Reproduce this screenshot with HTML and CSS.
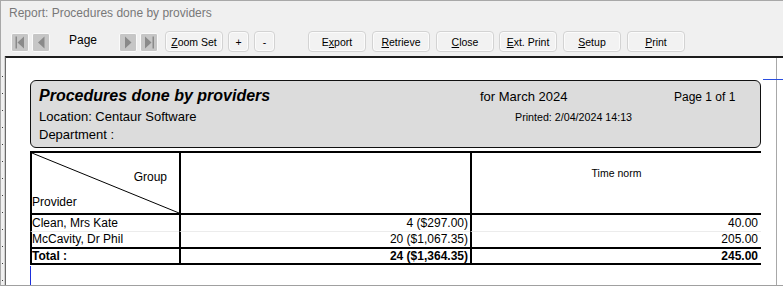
FILE: index.html
```html
<!DOCTYPE html>
<html>
<head>
<meta charset="utf-8">
<link rel="stylesheet" href="styles.css">
</head>
<body>
<div class="window">
  <div class="titlebar">Report: Procedures done by providers</div>
  <div class="toolbar">
    <span class="nav first"><svg width="16" height="17" viewBox="0 0 16 17"><rect x="3.5" y="2.5" width="1.5" height="12"/><path d="M12 2.5 V14.5 L5.5 8.5 Z"/></svg></span>
    <span class="nav prev"><svg width="16" height="17" viewBox="0 0 16 17"><path d="M11.5 2.5 V14.5 L5 8.5 Z"/></svg></span>
    <span class="page-label">Page</span>
    <span class="nav next"><svg width="16" height="17" viewBox="0 0 16 17"><path d="M5 2.5 V14.5 L11.5 8.5 Z"/></svg></span>
    <span class="nav last"><svg width="16" height="17" viewBox="0 0 16 17"><path d="M4 2.5 V14.5 L10.5 8.5 Z"/><rect x="11.5" y="2.5" width="1.5" height="12"/></svg></span>
    <button class="btn wide zoomset"><u>Z</u>oom Set</button>
    <button class="btn small plus">+</button>
    <button class="btn small minus">-</button>
    <button class="btn wide export">E<u>x</u>port</button>
    <button class="btn wide retrieve"><u>R</u>etrieve</button>
    <button class="btn wide close"><u>C</u>lose</button>
    <button class="btn wide extprint"><u>E</u>xt. Print</button>
    <button class="btn wide setup"><u>S</u>etup</button>
    <button class="btn wide print"><u>P</u>rint</button>
  </div>
  <div class="main">
    <div class="ruler"></div>
    <div class="viewport">
      <div class="page">
        <div class="header-box">
          <div class="title">Procedures done by providers</div>
          <div class="month">for March 2024</div>
          <div class="pageno">Page 1 of 1</div>
          <div class="loc">Location: Centaur Software</div>
          <div class="printed">Printed: 2/04/2024 14:13</div>
          <div class="empty"></div>
          <div class="dept">Department :</div>
        </div>
        <div class="grid">
          <div class="cell head h1">
            <svg class="diag" viewBox="0 0 100 100" preserveAspectRatio="none"><line x1="0" y1="0" x2="100" y2="100" vector-effect="non-scaling-stroke"/></svg>
            <div class="group">Group</div>
            <div class="provider">Provider</div>
          </div>
          <div class="cell head"></div>
          <div class="cell head h3">Time norm</div>

          <div class="cell r1">Clean, Mrs Kate</div>
          <div class="cell r1 num c2">4 ($297.00)</div>
          <div class="cell r1 num c3">40.00</div>

          <div class="cell r2">McCavity, Dr Phil</div>
          <div class="cell r2 num c2">20 ($1,067.35)</div>
          <div class="cell r2 num c3">205.00</div>

          <div class="cell tot">Total :</div>
          <div class="cell tot num c2">24 ($1,364.35)</div>
          <div class="cell tot num c3">245.00</div>
        </div>
        <div class="cursor"></div>
      </div>
      <div class="strip"></div>
      <div class="marker"></div>
    </div>
  </div>
</div>
</body>
</html>
```
FILE: styles.css
```css
html, body {
  margin: 0;
  padding: 0;
}
body {
  width: 783px;
  height: 286px;
  overflow: hidden;
  background: #f0f0f0;
  font-family: "Liberation Sans", Arial, sans-serif;
}
.window {
  box-sizing: border-box;
  width: 783px;
  height: 286px;
  border-top: 1px solid #a8a8a8;
  border-left: 1px solid #a8a8a8;
  border-bottom: 1px solid #a0a0a0;
  display: flex;
  flex-direction: column;
  background: #f0f0f0;
}
.titlebar {
  height: 25px;
  line-height: 25px;
  padding-left: 8px;
  font-size: 12px;
  color: #787878;
}
.toolbar {
  height: 30px;
  box-sizing: border-box;
  padding: 5px 0 0 10px;
  display: flex;
  align-items: flex-start;
}
.nav {
  box-sizing: border-box;
  width: 18px;
  height: 19px;
  margin-top: 2px;
  border: 1px solid #fafafa;
  border-radius: 2px;
  background: #c6c6c6;
  display: flex;
}
.nav svg {
  fill: #8a8a8a;
}
.prev { margin-left: 3px; }
.next { }
.last { margin-left: 3px; }
.page-label {
  width: 50px;
  margin-left: 19px;
  font-size: 12px;
  line-height: 18px;
  color: #000;
}
.btn {
  box-sizing: border-box;
  height: 21px;
  padding: 0;
  border: 1px solid #d3d3d3;
  border-radius: 4px;
  background: #f2f2f2;
  box-shadow: inset 0 0 0 1px #fbfbfb;
  font-family: "Liberation Sans", Arial, sans-serif;
  font-size: 10.5px;
  color: #000;
  text-align: center;
}
.btn u {
  text-underline-offset: 1px;
}
.wide { width: 58px; }
.small { width: 21px; }
.zoomset { margin-left: 7px; }
.plus { margin-left: 5px; }
.minus { margin-left: 5px; }
.export { margin-left: 33px; }
.retrieve { margin-left: 6px; }
.close { margin-left: 6px; }
.extprint { margin-left: 5px; }
.setup { margin-left: 6px; }
.print { margin-left: 6px; }

.main {
  flex: 1;
  display: flex;
  min-height: 0;
}
.ruler {
  width: 4px;
  background-image: repeating-linear-gradient(to bottom, transparent 0, transparent 16px, #3a3a3a 16px, #3a3a3a 17px);
  background-size: 1px 100%;
  background-repeat: no-repeat;
  background-position: 1px 4px;
  box-shadow: inset -1px 0 0 #d0d0d0;
}
.viewport {
  flex: 1;
  position: relative;
  display: flex;
  border-top: 2px solid #1c1c1c;
  border-left: 1px solid #6a6a6a;
  background: #fff;
  min-height: 0;
}
.page {
  flex: 1;
  padding: 22px 0 0 24px;
  background: #fff;
  overflow: hidden;
}
.strip {
  width: 6px;
  border-left: 1px solid #a8a8a8;
  background: #fff;
}
.marker {
  position: absolute;
  top: 21px;
  left: 757px;
  width: 20px;
  height: 1px;
  background: #2a4ee0;
}

.header-box {
  box-sizing: border-box;
  width: 731px;
  height: 68px;
  border: 1px solid #111;
  border-radius: 6px;
  background: #dcdcdc;
  padding: 4px 0 4px 8px;
  display: grid;
  grid-template-columns: 441px 194px 1fr;
  grid-template-rows: 21px 21px 16px;
  align-items: baseline;
  color: #000;
}
.title {
  font-style: italic;
  font-weight: bold;
  font-size: 16px;
  line-height: 21px;
}
.month {
  font-size: 13px;
  line-height: 21px;
}
.pageno {
  font-size: 12px;
  line-height: 21px;
}
.loc {
  font-size: 13px;
  line-height: 21px;
}
.printed {
  font-size: 10.7px;
  line-height: 21px;
  padding-left: 35px;
}
.dept {
  font-size: 13px;
  line-height: 16px;
}

.grid {
  display: grid;
  grid-template-columns: 149px 291px 291px;
  margin-top: 3px;
  font-size: 12px;
  color: #000;
}
.cell {
  box-sizing: border-box;
  border-left: 2px solid #000;
  white-space: nowrap;
}
.head {
  height: 64px;
  border-top: 2px solid #000;
  border-bottom: 2px solid #000;
}
.h1 {
  position: relative;
  padding-top: 17px;
}
.diag {
  position: absolute;
  left: 0;
  top: 0;
  width: 100%;
  height: 100%;
  stroke: #000;
  stroke-width: 1;
}
.group {
  line-height: 14px;
  text-align: right;
  padding-right: 12px;
}
.provider {
  line-height: 14px;
  margin-top: 11px;
}
.h3 {
  font-size: 10.5px;
  line-height: 13px;
  padding-top: 14px;
  text-align: center;
}
.r1 {
  height: 17px;
  line-height: 16px;
  border-bottom: 1px solid #ececec;
}
.r2 {
  height: 15px;
  line-height: 15px;
}
.tot {
  height: 18px;
  line-height: 14px;
  border-top: 2px solid #000;
  border-bottom: 2px solid #000;
  font-weight: bold;
}
.num {
  text-align: right;
}
.c2 { padding-right: 2px; }
.c3 { padding-right: 3px; }
.cursor {
  width: 0;
  height: 19px;
  margin-top: 1px;
  border-left: 1px solid #1d2fdc;
}
```
